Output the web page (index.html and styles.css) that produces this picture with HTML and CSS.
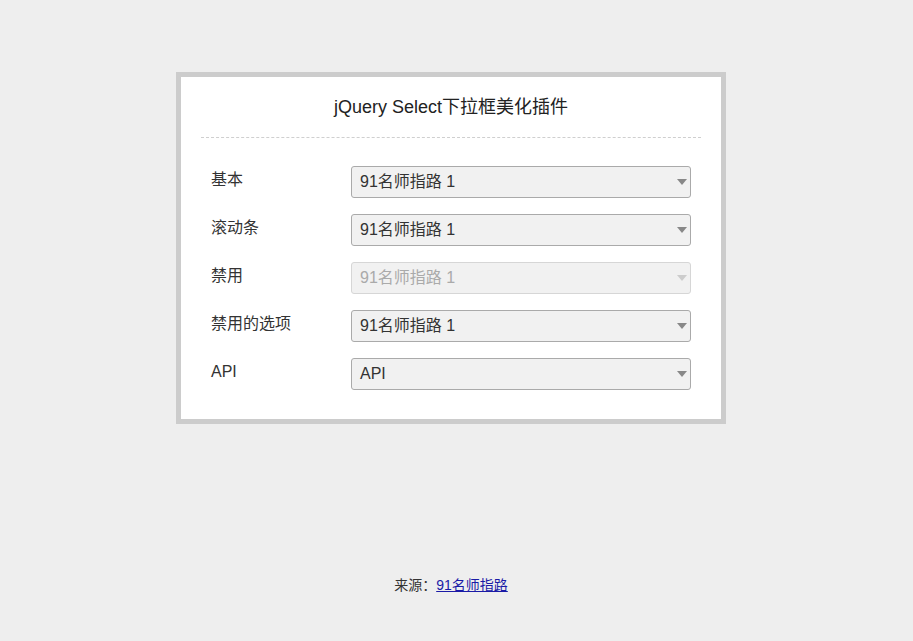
FILE: index.html
```html
<!DOCTYPE html>
<html lang="zh">
<head>
<meta charset="utf-8">
<title>jQuery Select下拉框美化插件</title>
<link rel="stylesheet" href="styles.css">
</head>
<body>
<div class="page">
  <div class="card">
    <h1 class="title">jQuery Select下拉框美化插件</h1>
    <div class="form">
      <div class="row">
        <label class="label">基本</label>
        <div class="select"><span class="value">91名师指路 1</span><i class="arrow"></i></div>
      </div>
      <div class="row">
        <label class="label">滚动条</label>
        <div class="select"><span class="value">91名师指路 1</span><i class="arrow"></i></div>
      </div>
      <div class="row">
        <label class="label">禁用</label>
        <div class="select disabled"><span class="value">91名师指路 1</span><i class="arrow"></i></div>
      </div>
      <div class="row">
        <label class="label">禁用的选项</label>
        <div class="select"><span class="value">91名师指路 1</span><i class="arrow"></i></div>
      </div>
      <div class="row">
        <label class="label">API</label>
        <div class="select"><span class="value">API</span><i class="arrow"></i></div>
      </div>
    </div>
  </div>
  <p class="footer">来源：<a href="#">91名师指路</a></p>
</div>
</body>
</html>
```
FILE: styles.css
```css
html, body {
  margin: 0;
  padding: 0;
  background: #eeeeee;
}
body {
  font-family: "Liberation Sans", "Noto Sans CJK SC", sans-serif;
  color: #333;
}
.page {
  width: 902px;
  padding-top: 72px;
  display: flex;
  flex-direction: column;
  align-items: center;
}
.card {
  box-sizing: border-box;
  width: 550px;
  border: 5px solid #cccccc;
  background: #ffffff;
  padding: 0 20px 29px;
}
.title {
  margin: 0;
  font-size: 18px;
  font-weight: normal;
  line-height: 24px;
  color: #222;
  text-align: center;
  padding: 18px 0 18px;
  border-bottom: 1px dashed #cfcfcf;
}
.form {
  padding: 28px 10px 0;
  display: flex;
  flex-direction: column;
  gap: 16px;
}
.row {
  display: flex;
  align-items: flex-start;
}
.label {
  width: 140px;
  font-size: 16px;
  line-height: 28px;
  color: #333;
}
.select {
  box-sizing: border-box;
  position: relative;
  width: 340px;
  height: 32px;
  border: 1px solid #aaaaaa;
  border-radius: 3px;
  background: #f1f1f1;
  padding: 0 8px;
  font-size: 16px;
  line-height: 30px;
  color: #333;
}
.arrow {
  position: absolute;
  right: 3px;
  top: 12px;
  width: 0;
  height: 0;
  border-left: 5px solid transparent;
  border-right: 5px solid transparent;
  border-top: 6px solid #888888;
}
.select.disabled {
  border-color: #d6d6d6;
  color: #aaaaaa;
}
.select.disabled .arrow {
  border-top-color: #cccccc;
}
.footer {
  margin: 0;
  margin-top: 151px;
  font-size: 14px;
  line-height: 20px;
  color: #333;
}
.footer a {
  color: #1a1aa6;
}
```
